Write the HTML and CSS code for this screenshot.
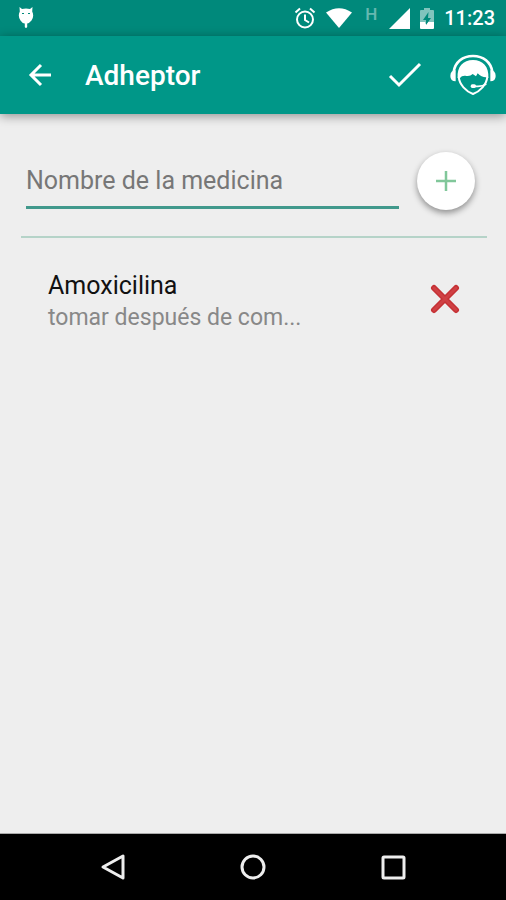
FILE: index.html
```html
<!DOCTYPE html>
<html lang="es">
<head>
<meta charset="utf-8">
<meta name="viewport" content="width=device-width, initial-scale=1">
<title>Adheptor</title>
<link rel="stylesheet" href="styles.css">
</head>
<body>
<div class="status">
  <svg class="status-bug" width="16" height="24" viewBox="0 0 16 24" fill="#fff" aria-hidden="true"><path fill-rule="evenodd" d="M1.500 1L4 3Q8 2 12 3L14.500 1L14.200 5.500Q16.500 10 13.500 14.500Q11.500 17 9.200 17.500V21Q8 23 6.800 21V17.500Q4 17 2.500 14.500Q-.5 10 1.800 5.500ZM4 7V8H6V7ZM10 7V8H12V7Z"/></svg>
  <div class="status-right">
    <svg width="22" height="22" viewBox="0 0 22 22" fill="none" stroke="#fff" stroke-width="2" aria-hidden="true"><circle cx="11" cy="12.500" r="8"/><path d="M1.500 5.500L6 1.500M20.500 5.500L16 1.500M11 7.500V13L15 15.500"/></svg>
    <svg class="wifi" width="26" height="20" viewBox="0 0 26 20" fill="#fff" aria-hidden="true"><path d="M0 4.500Q13-4 26 4.500L13 20Z"/></svg>
    <span class="network">H</span>
    <svg class="signal" width="21" height="21" viewBox="0 0 21 21" fill="#fff" aria-hidden="true"><path d="M21 0V21H0Z"/></svg>
    <svg class="battery" width="14" height="21" viewBox="0 0 14 21" aria-hidden="true"><path fill="#fff" fill-opacity=".5" d="M4 0H10V2H13Q14 2 14 3V15H0V3Q0 2 1 2H4Z"/><path fill="#fff" d="M0 14H5L6 16L8 14H14V20Q14 21 13 21H1Q0 21 0 20Z"/><path fill="#00897b" d="M8.500 4L3 12H6V17L11 10H8Z"/></svg>
    <time>11:23</time>
  </div>
</div>
<header class="appbar">
  <button class="icon-button" type="button" aria-label="Atrás"><svg width="24" height="24" viewBox="0 0 24 24" fill="none" stroke="#fff" stroke-width="3"><path d="M23 12H3M13 2L3 12L13 22"/></svg></button>
  <h1>Adheptor</h1>
  <button class="icon-button" type="button" aria-label="Guardar"><svg width="34" height="26" viewBox="0 0 34 26" fill="none" stroke="#fff" stroke-width="3"><path d="M2 14L11 23L32 2"/></svg></button>
  <button class="icon-button support" type="button" aria-label="Soporte"><svg width="46" height="42" viewBox="0 0 138 126"><path fill="none" stroke="#fff" stroke-width="8" d="M11 54C15 24 38 6 69 6C100 6 123 24 127 54"/><path fill="#fff" d="M17 49V82Q1 82 1 66Q1 49 17 49ZM121 49V82Q137 82 137 66Q137 49 121 49Z"/><path fill="#fff" d="M23 72C20 38 40 18 69 18C98 18 118 38 115 72L108 70Q94 70 83 58L78 67L68 60Q60 68 46 65Q35 64 30 72Z"/><path fill="none" stroke="#fff" stroke-width="6" d="M26 68C28 92 48 112 69 120C90 112 110 92 112 68"/><path fill="none" stroke="#fff" stroke-width="5" d="M109 90Q98 97 84 97H68"/><rect x="62" y="91" width="16" height="11" rx="5" fill="#fff"/></svg></button>
</header>
<main>
  <form class="add-form">
    <input type="text" aria-label="Nombre de la medicina" placeholder="Nombre de la medicina">
    <button class="fab" type="button" aria-label="Añadir"><svg width="20" height="20" viewBox="0 0 20 20" stroke="#81c79a" stroke-width="2.500" fill="none"><path d="M10 0V20M0 10H20"/></svg></button>
  </form>
  <ul class="medicines">
    <li>
      <div class="medicine"><h2>Amoxicilina</h2><p>tomar después de com...</p></div>
      <button class="icon-button" type="button" aria-label="Eliminar Amoxicilina"><svg width="30" height="30" viewBox="0 0 30 30" fill="none" stroke-linecap="round"><path stroke="#c53034" stroke-width="6" d="M4 4L26 26M26 4L4 26"/><path stroke="#cf4044" stroke-width="3" d="M4 4L26 26M26 4L4 26"/></svg></button>
    </li>
  </ul>
</main>
<nav class="navbar">
  <button class="icon-button" type="button" aria-label="Volver"><svg width="26" height="28" viewBox="0 0 26 28" fill="none" stroke="#eee" stroke-width="3" stroke-linejoin="round"><path d="M23 3V25L3 14Z"/></svg></button>
  <button class="icon-button" type="button" aria-label="Inicio"><svg width="26" height="26" viewBox="0 0 26 26" fill="none" stroke="#eee" stroke-width="3"><circle cx="13" cy="13" r="11"/></svg></button>
  <button class="icon-button" type="button" aria-label="Recientes"><svg width="26" height="26" viewBox="0 0 26 26" fill="none" stroke="#eee" stroke-width="3"><rect x="3" y="3" width="21" height="21" rx="1"/></svg></button>
</nav>
</body>
</html>
```
FILE: styles.css
```css
* { box-sizing: border-box; }

body {
  margin: 0;
  min-height: 100vh;
  display: flex;
  flex-direction: column;
  background: #eee;
  font-family: Roboto, "Liberation Sans", sans-serif;
}

h1, h2, p, ul { margin: 0; padding: 0; }
svg { display: block; flex: none; }

button {
  padding: 0;
  border: 0;
  background: none;
}

.icon-button {
  display: grid;
  place-items: center;
  width: 48px;
  height: 48px;
  flex: none;
}

.status {
  display: flex;
  align-items: center;
  justify-content: space-between;
  height: 36px;
  padding: 0 11px 0 18px;
  background: #00897b;
  color: #fff;
}

.status-right {
  display: flex;
  align-items: center;
  gap: 10px;
}

.network {
  padding: 0 2px 8px 3px;
  font-size: 17px;
  font-weight: 500;
  line-height: 18px;
  opacity: 0.4;
}

.status time {
  font-size: 20px;
  font-weight: 500;
  line-height: 24px;
}

.appbar {
  display: flex;
  align-items: center;
  height: 78px;
  padding: 0 9px 0 16px;
  background: #009788;
  color: #fff;
  box-shadow: 0 2px 10px rgba(0, 0, 0, 0.4);
}

.appbar h1 {
  flex: 1;
  padding: 2px 0 0 21px;
  font-size: 28px;
  font-weight: 500;
  line-height: 32px;
}

.support { margin-left: 20px; }

main {
  flex: 1;
  padding: 38px 19px 0 21px;
}

.add-form {
  display: flex;
  gap: 18px;
  padding: 0 12px 26px 5px;
  border-bottom: 2px solid #b5d3c8;
}

.add-form input {
  flex: 1;
  min-width: 0;
  height: 57px;
  padding: 2px 0 0;
  border: 0;
  border-bottom: 3px solid #41998c;
  border-radius: 0;
  outline: 0;
  background: none;
  color: #222;
  font: 25px/32px Roboto, "Liberation Sans", sans-serif;
}

.add-form input::placeholder { color: #777; opacity: 1; }

.fab {
  display: grid;
  place-items: center;
  flex: none;
  width: 58px;
  height: 58px;
  border-radius: 50%;
  background: #fff;
  box-shadow: 0 3px 6px rgba(0, 0, 0, 0.4);
}

.medicines { list-style: none; }

.medicines li {
  display: flex;
  align-items: flex-start;
  justify-content: space-between;
  padding: 32px 18px 30px 27px;
}

.medicines .icon-button { margin-top: 5px; }

.medicine h2 {
  color: #111;
  font-size: 25px;
  font-weight: 400;
  line-height: 32px;
}

.medicine p {
  color: #888;
  font-size: 23px;
  line-height: 32px;
}

.navbar {
  display: flex;
  align-items: center;
  justify-content: center;
  gap: 92px;
  height: 67px;
  border-top: 1px solid #aaa;
  background: #000;
}
```
